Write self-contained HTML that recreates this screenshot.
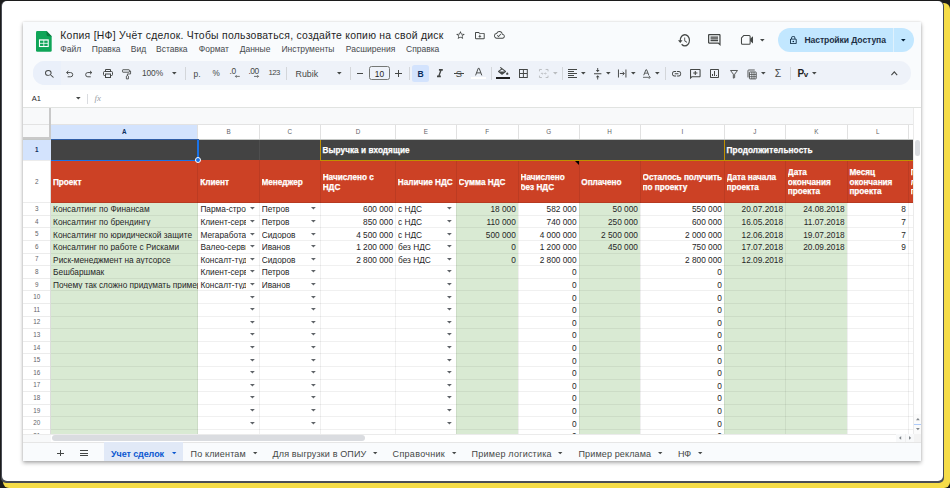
<!DOCTYPE html><html><head><meta charset='utf-8'><style>
*{box-sizing:border-box}
html,body{margin:0;padding:0}
body{width:950px;height:488px;position:relative;overflow:hidden;background:#1c1c1c;font-family:"Liberation Sans", sans-serif;}
.a{position:absolute}
.t{position:absolute;white-space:nowrap;line-height:1}
svg{position:absolute;overflow:visible}
</style></head><body>
<div class='a' style='left:3px;top:3px;width:947px;height:485px;background:#f5dc48;border-radius:6px'></div>
<div class='a' style='left:1.3px;top:0.9px;width:943.0px;height:482.0px;background:#4a4d55;border-radius:5px'></div>
<div class='a' style='left:1.5px;top:1.0px;width:941.5px;height:479.9px;background:#fff;border-radius:5px'></div>
<div class='a' style='left:22.8px;top:22.4px;width:898.2px;height:438.6px;background:#f9fbfd;box-shadow:0 2px 4px rgba(0,0,0,.32),0 0 2px rgba(0,0,0,.12)'></div>
<svg style='left:35.9px;top:30.9px' width='15.7' height='20.8' viewBox='0 0 16 21' preserveAspectRatio='none'>
<path d='M1.3 0H10.8L16 5.2V19.6Q16 21 14.6 21H1.4Q0 21 0 19.6V1.4Q0 0 1.3 0z' fill='#0fa558'/>
<path d='M10.8 0L16 5.2H12.2Q10.8 5.2 10.8 3.8z' fill='#0a7a3f'/>
<rect x='3' y='8.4' width='10' height='7.8' fill='#fff'/>
<rect x='4.1' y='9.7' width='3.5' height='2.3' fill='#0fa558'/>
<rect x='8.4' y='9.7' width='3.5' height='2.3' fill='#0fa558'/>
<rect x='4.1' y='12.8' width='3.5' height='2.3' fill='#0fa558'/>
<rect x='8.4' y='12.8' width='3.5' height='2.3' fill='#0fa558'/>
</svg>
<div class='t' style='left:60.30px;top:30.90px;font-size:10.4px;color:#1f1f1f;letter-spacing:0.26px'>Копия [НФ] Учёт сделок. Чтобы пользоваться, создайте копию на свой диск</div>
<svg style='left:456.40px;top:30.90px;' width='8.90' height='8.00' viewBox='2 2 20 19' preserveAspectRatio='none' fill='#444746'><path d='M22 9.24l-7.19-.62L12 2 9.19 8.63 2 9.24l5.46 4.73L5.82 21 12 17.27 18.18 21l-1.63-7.03L22 9.24zM12 15.4l-3.76 2.27 1-4.28-3.32-2.88 4.38-.38L12 6.1l1.71 4.04 4.38.38-3.32 2.88 1 4.28L12 15.4z'/></svg>
<svg style='left:475.30px;top:31.70px;' width='9.70' height='7.20' viewBox='2 4 20 16' preserveAspectRatio='none' fill='#444746'><path d='M20 6h-8l-2-2H4c-1.1 0-2 .9-2 2v12c0 1.1.9 2 2 2h16c1.1 0 2-.9 2-2V8c0-1.1-.9-2-2-2zm0 12H4V6h5.17l2 2H20v10zM12.5 10h-1.5v3.5H8.5L12 17l3.5-3.5H13V10z'/></svg>
<svg style='left:494.20px;top:31.20px;' width='10.80' height='7.70' viewBox='0 4 24 16' preserveAspectRatio='none' fill='#444746'><path d='M19.35 10.04A7.49 7.49 0 0 0 12 4C9.11 4 6.6 5.64 5.35 8.04A5.994 5.994 0 0 0 0 14c0 3.31 2.69 6 6 6h13c2.76 0 5-2.24 5-5 0-2.64-2.05-4.78-4.65-4.96zM19 18H6c-2.21 0-4-1.79-4-4 0-2.05 1.53-3.76 3.56-3.97l1.07-.11.5-.95A5.469 5.469 0 0 1 12 6c2.62 0 4.88 1.86 5.39 4.43l.3 1.5 1.53.11A2.98 2.98 0 0 1 22 15c0 1.65-1.35 3-3 3zm-9-3.82l-2.09-2.09L6.5 13.5 10 17l6.01-6.01-1.41-1.41z'/></svg>
<div class='t' style='left:60.30px;top:45.40px;font-size:8.5px;color:#46494d'>Файл</div>
<div class='t' style='left:91.80px;top:45.40px;font-size:8.5px;color:#46494d'>Правка</div>
<div class='t' style='left:130.80px;top:45.40px;font-size:8.5px;color:#46494d'>Вид</div>
<div class='t' style='left:156.00px;top:45.40px;font-size:8.5px;color:#46494d'>Вставка</div>
<div class='t' style='left:198.80px;top:45.40px;font-size:8.5px;color:#46494d'>Формат</div>
<div class='t' style='left:239.70px;top:45.40px;font-size:8.5px;color:#46494d'>Данные</div>
<div class='t' style='left:281.40px;top:45.40px;font-size:8.5px;color:#46494d'>Инструменты</div>
<div class='t' style='left:345.80px;top:45.40px;font-size:8.5px;color:#46494d'>Расширения</div>
<div class='t' style='left:406.00px;top:45.40px;font-size:8.5px;color:#46494d'>Справка</div>
<svg style='left:677.90px;top:33.50px;' width='12.60' height='12.60' viewBox='1 3 22 18' preserveAspectRatio='none' fill='#444746'><path d='M13 3a9 9 0 0 0-9 9H1l3.89 3.89.07.14L9 12H6c0-3.87 3.13-7 7-7s7 3.13 7 7-3.13 7-7 7c-1.93 0-3.68-.79-4.94-2.06l-1.42 1.42A8.954 8.954 0 0 0 13 21a9 9 0 0 0 0-18zm-1 5v5l4.28 2.54.72-1.21-3.5-2.08V8H12z'/></svg>
<svg style='left:707.90px;top:34.00px;' width='12.60' height='12.10' viewBox='2 2 20 20' preserveAspectRatio='none' fill='#444746'><path d='M21.99 4c0-1.1-.89-2-1.99-2H4c-1.1 0-2 .9-2 2v12c0 1.1.9 2 2 2h14l4 4-.01-18zM20 4v13.17L18.83 16H4V4h16zM6 12h12v2H6zm0-3h12v2H6zm0-3h12v2H6z'/></svg>
<svg style='left:740.70px;top:35.00px;' width='12.50' height='9.80' viewBox='0 0 26 20' preserveAspectRatio='none' fill='#444746'><path d='M6 1H17Q19 1 19 3V17Q19 19 17 19H3Q1 19 1 17V6z' fill='none' stroke='#444746' stroke-width='2.2' stroke-linejoin='round'/><path d='M19 7.5L25 2.5V17.5L19 12.5z'/></svg>
<svg style='left:759.50px;top:38.60px' width='4.60' height='2.40' viewBox='0 0 10 5' preserveAspectRatio='none'><path d='M0 0h10L5 5z' fill='#444746'/></svg>
<div class='a' style='left:777.7px;top:28px;width:136.3px;height:24px;background:#c2e7ff;border-radius:12px'></div>
<div class='a' style='left:892.84375px;top:28.0px;width:1.0px;height:24.0px;background:#dff1fd;'></div>
<svg style='left:790.00px;top:35.90px;' width='6.60' height='8.10' viewBox='4 1 16 21' preserveAspectRatio='none' fill='#001d35'><path d='M18 8h-1V6c0-2.76-2.24-5-5-5S7 3.24 7 6v2H6c-1.1 0-2 .9-2 2v10c0 1.1.9 2 2 2h12c1.1 0 2-.9 2-2V10c0-1.1-.9-2-2-2zM9 6c0-1.66 1.34-3 3-3s3 1.34 3 3v2H9V6zm9 14H6V10h12v10zm-6-3c1.1 0 2-.9 2-2s-.9-2-2-2-2 .9-2 2 .9 2 2 2z'/></svg>
<div class='t' style='left:804.50px;top:35.62px;font-size:8.6px;color:#1c2f45;font-weight:bold;letter-spacing:-0.1px'>Настройки Доступа</div>
<svg style='left:900.70px;top:39.10px' width='4.60' height='2.40' viewBox='0 0 10 5' preserveAspectRatio='none'><path d='M0 0h10L5 5z' fill='#001d35'/></svg>
<div class='a' style='left:33px;top:61.4px;width:878px;height:23.6px;background:#eef2f9;border-radius:11.8px'></div>
<div class='a' style='left:33px;top:61.4px;width:28px;height:23.6px;background:#eaf0fa;border-radius:11.8px 0 0 11.8px'></div>
<svg style='left:44.70px;top:69.80px;' width='8.90' height='7.80' viewBox='3 3 17.5 17.5' preserveAspectRatio='none' fill='#444746'><path d='M15.5 14h-.79l-.28-.27A6.471 6.471 0 0 0 16 9.5 6.5 6.5 0 1 0 9.5 16c1.61 0 3.09-.59 4.23-1.57l.27.28v.79l5 4.99L20.49 19l-4.99-5zm-6 0C7.01 14 5 11.99 5 9.5S7.01 5 9.5 5 14 7.01 14 9.5 11.99 14 9.5 14z'/></svg>
<svg style='left:65.80px;top:70.30px;' width='7.40' height='7.30' viewBox='0 0 10 10' preserveAspectRatio='none' fill='#444746'><path d='M3.2 1.2L0.8 3.5 3.2 5.8' fill='none' stroke='#444746' stroke-width='1.3'/><path d='M1 3.5H6.2A2.9 2.9 0 0 1 6.2 9.3H2.2' fill='none' stroke='#444746' stroke-width='1.3'/></svg>
<svg style='left:84.80px;top:70.30px;' width='7.40' height='7.30' viewBox='0 0 10 10' preserveAspectRatio='none' fill='#444746'><path d='M6.8 1.2L9.2 3.5 6.8 5.8' fill='none' stroke='#444746' stroke-width='1.3'/><path d='M9 3.5H3.8A2.9 2.9 0 0 0 3.8 9.3H7.8' fill='none' stroke='#444746' stroke-width='1.3'/></svg>
<svg style='left:103.00px;top:69.30px;' width='10.00' height='9.00' viewBox='0 0 20 18' preserveAspectRatio='none' fill='#444746'><path d='M5 5V1h10v4' fill='none' stroke='#444746' stroke-width='2'/><rect x='1' y='5' width='18' height='8' rx='2' fill='none' stroke='#444746' stroke-width='2'/><rect x='5' y='10' width='10' height='7' fill='#edf2fa' stroke='#444746' stroke-width='2'/></svg>
<svg style='left:122.00px;top:68.80px;' width='9.20' height='10.40' viewBox='0 0 18 21' preserveAspectRatio='none' fill='#444746'><rect x='1' y='1.5' width='13.5' height='5' rx='1' fill='none' stroke='#444746' stroke-width='1.8'/><path d='M14.5 4H16.8V10H10.6V13.5' fill='none' stroke='#444746' stroke-width='1.7'/><path d='M8.6 14.5L10.6 13L12.6 14.5V20H8.6z' fill='none' stroke='#444746' stroke-width='1.7' stroke-linejoin='round'/></svg>
<div class='t' style='left:142.00px;top:69.49px;font-size:8.4px;color:#444746;letter-spacing:-0.1px'>100%</div>
<svg style='left:172.40px;top:72.40px' width='4.60' height='2.40' viewBox='0 0 10 5' preserveAspectRatio='none'><path d='M0 0h10L5 5z' fill='#444746'/></svg>
<div class='a' style='left:185.296875px;top:67.0px;width:1.0px;height:12.5px;background:#d3d6da;'></div>
<div class='t' style='left:193.60px;top:70.19px;font-size:8.4px;color:#444746'>р.</div>
<div class='t' style='left:212.50px;top:70.36px;font-size:8.2px;color:#444746'>%</div>
<div class='t' style='left:229.60px;top:67.29px;font-size:8.4px;color:#444746;letter-spacing:-0.5px'>.0</div>
<svg style='left:235.40px;top:75.00px;' width='4.80' height='2.80' viewBox='0 0 10 6' preserveAspectRatio='none' fill='#444746'><path d='M3.2 .4L.9 3 3.2 5.6M1.2 3H10' fill='none' stroke='#444746' stroke-width='1.6'/></svg>
<div class='t' style='left:248.60px;top:67.29px;font-size:8.4px;color:#444746;letter-spacing:-0.6px'>.00</div>
<svg style='left:254.20px;top:75.00px;' width='5.00' height='2.80' viewBox='0 0 10 6' preserveAspectRatio='none' fill='#444746'><path d='M6.8 .4L9.1 3 6.8 5.6M0 3H8.8' fill='none' stroke='#444746' stroke-width='1.6'/></svg>
<div class='t' style='left:268.40px;top:68.98px;font-size:7.7px;color:#444746;letter-spacing:-0.45px'>123</div>
<div class='a' style='left:285.90625px;top:67.0px;width:1.0px;height:12.5px;background:#d3d6da;'></div>
<div class='t' style='left:295.60px;top:69.85px;font-size:8.8px;color:#444746'>Rubik</div>
<svg style='left:336.50px;top:72.40px' width='4.60' height='2.40' viewBox='0 0 10 5' preserveAspectRatio='none'><path d='M0 0h10L5 5z' fill='#444746'/></svg>
<div class='a' style='left:350.09375px;top:67.0px;width:1.0px;height:12.5px;background:#d3d6da;'></div>
<div class='a' style='left:357.203125px;top:73.09375px;width:6.0px;height:1.0px;background:#444746;'></div>
<div class='a' style='left:369.2px;top:66px;width:20.7px;height:14.4px;border:0.8px solid #747775;border-radius:2.5px'></div>
<div class='t' style='left:279.50px;width:200px;text-align:center;top:69.89px;font-size:8.4px;color:#1f1f1f'>10</div>
<div class='a' style='left:395.0px;top:73.09375px;width:6.703125px;height:1.0px;background:#444746;'></div>
<div class='a' style='left:397.84375px;top:70.296875px;width:1.0px;height:6.703125px;background:#444746;'></div>
<div class='a' style='left:409.0px;top:67.0px;width:1.0px;height:12.5px;background:#d3d6da;'></div>
<div class='a' style='left:412px;top:64.6px;width:17.3px;height:17.3px;background:#d3e3fd;border-radius:2.5px'></div>
<div class='t' style='left:320.70px;width:200px;text-align:center;top:69.82px;font-size:8.6px;color:#0b2e5e;font-weight:bold'>B</div>
<svg style='left:436.60px;top:69.20px;' width='5.80' height='8.20' viewBox='6 4 12 14' preserveAspectRatio='none' fill='#444746'><path d='M10 4v3h2.21l-3.42 8H6v3h8v-3h-2.21l3.42-8H18V4z'/></svg>
<div class='t' style='left:359.00px;width:200px;text-align:center;top:68.94px;font-size:9.4px;color:#444746'>S</div>
<div class='a' style='left:453.796875px;top:72.90625px;width:10.40625px;height:1.0px;background:#444746;'></div>
<svg style='left:474.60px;top:68.00px;' width='7.40' height='7.40' viewBox='0 0 10 10' preserveAspectRatio='none' fill='#444746'><path d='M0.8 10L4.3 0.5H5.7L9.2 10M2.3 6.6H7.7' fill='none' stroke='#444746' stroke-width='1.3'/></svg>
<div class='a' style='left:471.0px;top:77.203125px;width:14.5px;height:2.0px;background:#ffffff;'></div>
<div class='a' style='left:490.90625px;top:67.0px;width:1.0px;height:12.5px;background:#d3d6da;'></div>
<svg style='left:497.50px;top:66.80px;' width='11.00' height='7.80' viewBox='3 0 19 17' preserveAspectRatio='none' fill='#444746'><path d='M16.56 8.94L7.62 0 6.21 1.41l2.38 2.38-5.15 5.15a1.49 1.49 0 0 0 0 2.12l5.5 5.5c.29.29.68.44 1.06.44s.77-.15 1.06-.44l5.5-5.5c.59-.58.59-1.53 0-2.12zM5.21 10L10 5.21 14.79 10H5.21zM19 11.5s-2 2.17-2 3.5c0 1.1.9 2 2 2s2-.9 2-2c0-1.33-2-3.5-2-3.5z'/></svg>
<div class='a' style='left:496.296875px;top:76.59375px;width:13.90625px;height:2.0px;background:#1f1f1f;'></div>
<svg style='left:518.70px;top:69.00px;' width='8.80' height='9.00' viewBox='3 3 18 18' preserveAspectRatio='none' fill='#444746'><path d='M3 3v18h18V3H3zm8 16H5v-6h6v6zm0-8H5V5h6v6zm8 8h-6v-6h6v6zm0-8h-6V5h6v6z'/></svg>
<svg style='left:538.50px;top:69.00px;' width='9.50' height='9.00' viewBox='0 0 20 19' preserveAspectRatio='none' fill='#b9bcbf'><path d='M1 5V1H6M14 1H19V5M19 14V18H14M6 18H1V14' fill='none' stroke='#b9bcbf' stroke-width='2'/><path d='M4 9.5H8M6.5 7.5L8.5 9.5 6.5 11.5M16 9.5H12M13.5 7.5L11.5 9.5 13.5 11.5' fill='none' stroke='#b9bcbf' stroke-width='1.6'/></svg>
<svg style='left:553.20px;top:72.40px' width='4.60' height='2.40' viewBox='0 0 10 5' preserveAspectRatio='none'><path d='M0 0h10L5 5z' fill='#b9bcbf'/></svg>
<div class='a' style='left:561.90625px;top:67.0px;width:1.0px;height:12.5px;background:#d3d6da;'></div>
<svg style='left:568.00px;top:69.00px;' width='9.00' height='9.00' viewBox='3 3 18 18' preserveAspectRatio='none' fill='#444746'><path d='M15 15H3v2h12v-2zm0-8H3v2h12V7zM3 13h18v-2H3v2zm0 8h18v-2H3v2zM3 3v2h18V3H3z'/></svg>
<svg style='left:581.40px;top:72.40px' width='4.60' height='2.40' viewBox='0 0 10 5' preserveAspectRatio='none'><path d='M0 0h10L5 5z' fill='#444746'/></svg>
<svg style='left:593.60px;top:67.80px;' width='7.40' height='11.40' viewBox='4 1 16 22' preserveAspectRatio='none' fill='#444746'><path d='M8 19h3v4h2v-4h3l-4-4-4 4zm8-14h-3V1h-2v4H8l4 4 4-4zM4 11v2h16v-2H4z'/></svg>
<svg style='left:605.70px;top:72.40px' width='4.60' height='2.40' viewBox='0 0 10 5' preserveAspectRatio='none'><path d='M0 0h10L5 5z' fill='#444746'/></svg>
<svg style='left:617.60px;top:69.00px;' width='8.40' height='9.00' viewBox='0 0 18 18' preserveAspectRatio='none' fill='#444746'><path d='M1 1V17M17 1V17' stroke='#444746' stroke-width='2' fill='none'/><path d='M4 9H13M10 5.5L13.5 9 10 12.5' stroke='#444746' stroke-width='2' fill='none'/></svg>
<svg style='left:630.50px;top:72.40px' width='4.60' height='2.40' viewBox='0 0 10 5' preserveAspectRatio='none'><path d='M0 0h10L5 5z' fill='#444746'/></svg>
<svg style='left:642.70px;top:68.80px;' width='7.80' height='10.40' viewBox='0 0 16 20' preserveAspectRatio='none' fill='#444746'><path d='M1.5 12L6 1.5H7.5L12 12' fill='none' stroke='#444746' stroke-width='1.8'/><path d='M3.5 8H10' stroke='#444746' stroke-width='1.6'/><path d='M0 16H14M12 13L15 16 12 19' fill='none' stroke='#444746' stroke-width='1.6'/></svg>
<svg style='left:654.70px;top:72.40px' width='4.60' height='2.40' viewBox='0 0 10 5' preserveAspectRatio='none'><path d='M0 0h10L5 5z' fill='#444746'/></svg>
<div class='a' style='left:664.5px;top:67.0px;width:1.0px;height:12.5px;background:#d3d6da;'></div>
<svg style='left:671.80px;top:70.60px;' width='9.20' height='5.60' viewBox='2 7 20 10' preserveAspectRatio='none' fill='#444746'><path d='M3.9 12c0-1.71 1.39-3.1 3.1-3.1h4V7H7c-2.76 0-5 2.24-5 5s2.24 5 5 5h4v-1.9H7c-1.71 0-3.1-1.39-3.1-3.1zM8 13h8v-2H8v2zm9-6h-4v1.9h4c1.71 0 3.1 1.39 3.1 3.1s-1.39 3.1-3.1 3.1h-4V17h4c2.76 0 5-2.24 5-5s-2.24-5-5-5z'/></svg>
<svg style='left:690.00px;top:68.80px;' width='10.60' height='10.20' viewBox='2 2 20 20' preserveAspectRatio='none' fill='#444746'><path d='M20 2H4c-1.1 0-2 .9-2 2v18l4-4h14c1.1 0 2-.9 2-2V4c0-1.1-.9-2-2-2zm0 14H5.17L4 17.17V4h16v12z'/><path d='M11 6h2v3h3v2h-3v3h-2v-3H8V9h3z'/></svg>
<svg style='left:710.00px;top:69.00px;' width='9.00' height='9.00' viewBox='3 3 18 18' preserveAspectRatio='none' fill='#444746'><path d='M19 3H5c-1.1 0-2 .9-2 2v14c0 1.1.9 2 2 2h14c1.1 0 2-.9 2-2V5c0-1.1-.9-2-2-2zm0 16H5V5h14v14zM7 13h2v4H7zm4-6h2v10h-2zm4 8h2v2h-2z'/></svg>
<svg style='left:730.00px;top:69.60px;' width='8.00' height='8.40' viewBox='0 0 16 17' preserveAspectRatio='none' fill='#444746'><path d='M1 1H15L9.3 8.5V15.5L6.7 16.5V8.5z' fill='none' stroke='#444746' stroke-width='1.8' stroke-linejoin='round'/></svg>
<svg style='left:747.00px;top:68.80px;' width='9.70' height='10.40' viewBox='0 0 20 21' preserveAspectRatio='none' fill='#444746'><rect x='5' y='6' width='14' height='14' rx='1' fill='none' stroke='#444746' stroke-width='1.8'/><path d='M5 11H19M5 15.5H19M10 6V20M14.5 6V20' stroke='#444746' stroke-width='1.5'/><path d='M2 17V3.5Q2 2 3.5 2H16' fill='none' stroke='#444746' stroke-width='1.8'/></svg>
<svg style='left:760.70px;top:72.40px' width='4.60' height='2.40' viewBox='0 0 10 5' preserveAspectRatio='none'><path d='M0 0h10L5 5z' fill='#444746'/></svg>
<div class='t' style='left:678.00px;width:200px;text-align:center;top:68.80px;font-size:10.4px;color:#444746'>&Sigma;</div>
<div class='a' style='left:789.796875px;top:67.0px;width:1.0px;height:12.5px;background:#d3d6da;'></div>
<div class='t' style='left:797.40px;top:69.44px;font-size:10.0px;color:#1f1f1f;font-weight:bold;letter-spacing:-0.4px'>P<span style='font-size:8px'>v</span></div>
<svg style='left:812.40px;top:72.40px' width='4.60' height='2.40' viewBox='0 0 10 5' preserveAspectRatio='none'><path d='M0 0h10L5 5z' fill='#444746'/></svg>
<svg style='left:891.00px;top:70.80px;' width='6.60' height='4.60' viewBox='6 8 12 7.41' preserveAspectRatio='none' fill='#444746'><path d='M12 8l-6 6 1.41 1.41L12 10.83l4.59 4.58L18 14z'/></svg>
<div class='a' style='left:22.796875px;top:90.0px;width:898.203125px;height:16.90625px;background:#ffffff;'></div>
<div class='a' style='left:22.796875px;top:106.75px;width:898.203125px;height:1.0px;background:#e1e3e1;'></div>
<div class='t' style='left:31.70px;top:94.65px;font-size:7.5px;color:#1f1f1f'>A1</div>
<svg style='left:75.50px;top:97.40px' width='4.60' height='2.40' viewBox='0 0 10 5' preserveAspectRatio='none'><path d='M0 0h10L5 5z' fill='#444746'/></svg>
<div class='a' style='left:87.40625px;top:94.203125px;width:1.0px;height:9.5px;background:#dadce0;'></div>
<div class='t' style='left:94.40px;top:94.38px;font-size:9.0px;color:#9aa0a6;font-family:"Liberation Serif",serif;font-style:italic'>fx</div>
<div class='a' style='left:22.796875px;top:107.59375px;width:890.796875px;height:17.0px;background:#f8f9fa;'></div>
<div class='a' style='left:22.796875px;top:124.203125px;width:890.796875px;height:1.0px;background:#e3e3e3;'></div>
<div class='a' style='left:22.796875px;top:125.0px;width:27.796875px;height:14.09375px;background:#f8f9fa;'></div>
<div class='a' style='left:50.59375px;top:125.0px;width:863.0px;height:14.09375px;background:#ffffff;'></div>
<div class='a' style='left:50.59375px;top:125.0px;width:147.3125px;height:14.09375px;background:#d3e3fd;'></div>
<div class='t' style='left:24.25px;width:200px;text-align:center;top:129.07px;font-size:6.3px;color:#0b2e5e;font-weight:bold'>A</div>
<div class='a' style='left:197.453125px;top:125.0px;width:1.0px;height:14.09375px;background:#e1e1e1;'></div>
<div class='t' style='left:128.55px;width:200px;text-align:center;top:129.07px;font-size:6.3px;color:#5f6368'>B</div>
<div class='a' style='left:258.75px;top:125.0px;width:1.0px;height:14.09375px;background:#e1e1e1;'></div>
<div class='t' style='left:189.80px;width:200px;text-align:center;top:129.07px;font-size:6.3px;color:#5f6368'>C</div>
<div class='a' style='left:319.953125px;top:125.0px;width:1.0px;height:14.09375px;background:#e1e1e1;'></div>
<div class='t' style='left:257.95px;width:200px;text-align:center;top:129.07px;font-size:6.3px;color:#5f6368'>D</div>
<div class='a' style='left:395.046875px;top:125.0px;width:1.0px;height:14.09375px;background:#e1e1e1;'></div>
<div class='t' style='left:325.90px;width:200px;text-align:center;top:129.07px;font-size:6.3px;color:#5f6368'>E</div>
<div class='a' style='left:455.84375px;top:125.0px;width:1.0px;height:14.09375px;background:#e1e1e1;'></div>
<div class='t' style='left:387.25px;width:200px;text-align:center;top:129.07px;font-size:6.3px;color:#5f6368'>F</div>
<div class='a' style='left:517.75px;top:125.0px;width:1.0px;height:14.09375px;background:#e1e1e1;'></div>
<div class='t' style='left:448.60px;width:200px;text-align:center;top:129.07px;font-size:6.3px;color:#5f6368'>G</div>
<div class='a' style='left:578.546875px;top:125.0px;width:1.0px;height:14.09375px;background:#e1e1e1;'></div>
<div class='t' style='left:509.65px;width:200px;text-align:center;top:129.07px;font-size:6.3px;color:#5f6368'>H</div>
<div class='a' style='left:639.84375px;top:125.0px;width:1.0px;height:14.09375px;background:#e1e1e1;'></div>
<div class='t' style='left:582.30px;width:200px;text-align:center;top:129.07px;font-size:6.3px;color:#5f6368'>I</div>
<div class='a' style='left:723.84375px;top:125.0px;width:1.0px;height:14.09375px;background:#e1e1e1;'></div>
<div class='t' style='left:654.90px;width:200px;text-align:center;top:129.07px;font-size:6.3px;color:#5f6368'>J</div>
<div class='a' style='left:785.046875px;top:125.0px;width:1.0px;height:14.09375px;background:#e1e1e1;'></div>
<div class='t' style='left:716.30px;width:200px;text-align:center;top:129.07px;font-size:6.3px;color:#5f6368'>K</div>
<div class='a' style='left:846.65625px;top:125.0px;width:1.0px;height:14.09375px;background:#e1e1e1;'></div>
<div class='t' style='left:777.70px;width:200px;text-align:center;top:129.07px;font-size:6.3px;color:#5f6368'>L</div>
<div class='a' style='left:907.84375px;top:125.0px;width:1.0px;height:14.09375px;background:#e1e1e1;'></div>
<div class='a' style='left:22.796875px;top:138.90625px;width:890.796875px;height:1.0px;background:#c4c7c5;'></div>
<div class='a' style='left:48.90625px;top:107.59375px;width:2.1875px;height:31.8125px;background:#c9c9c9;'></div>
<div class='a' style='left:22.796875px;top:136.90625px;width:28.296875px;height:2.5px;background:#c9c9c9;'></div>
<div class='a' style='left:50.59375px;top:139.59375px;width:147.3125px;height:20.8125px;background:#434343;'></div>
<div class='a' style='left:50.59375px;top:160.40625px;width:147.3125px;height:42.1875px;background:#cc4125;'></div>
<div class='a' style='left:50.59375px;top:202.59375px;width:147.3125px;height:231.3125px;background:#d9ead3;'></div>
<div class='a' style='left:197.90625px;top:139.59375px;width:61.296875px;height:20.8125px;background:#434343;'></div>
<div class='a' style='left:197.90625px;top:160.40625px;width:61.296875px;height:42.1875px;background:#cc4125;'></div>
<div class='a' style='left:197.90625px;top:202.59375px;width:61.296875px;height:231.3125px;background:#ffffff;'></div>
<div class='a' style='left:259.203125px;top:139.59375px;width:61.203125px;height:20.8125px;background:#434343;'></div>
<div class='a' style='left:259.203125px;top:160.40625px;width:61.203125px;height:42.1875px;background:#cc4125;'></div>
<div class='a' style='left:259.203125px;top:202.59375px;width:61.203125px;height:231.3125px;background:#ffffff;'></div>
<div class='a' style='left:320.40625px;top:139.59375px;width:75.09375px;height:20.8125px;background:#434343;'></div>
<div class='a' style='left:320.40625px;top:160.40625px;width:75.09375px;height:42.1875px;background:#cc4125;'></div>
<div class='a' style='left:320.40625px;top:202.59375px;width:75.09375px;height:231.3125px;background:#ffffff;'></div>
<div class='a' style='left:395.5px;top:139.59375px;width:60.796875px;height:20.8125px;background:#434343;'></div>
<div class='a' style='left:395.5px;top:160.40625px;width:60.796875px;height:42.1875px;background:#cc4125;'></div>
<div class='a' style='left:395.5px;top:202.59375px;width:60.796875px;height:231.3125px;background:#ffffff;'></div>
<div class='a' style='left:456.296875px;top:139.59375px;width:61.90625px;height:20.8125px;background:#434343;'></div>
<div class='a' style='left:456.296875px;top:160.40625px;width:61.90625px;height:42.1875px;background:#cc4125;'></div>
<div class='a' style='left:456.296875px;top:202.59375px;width:61.90625px;height:231.3125px;background:#d9ead3;'></div>
<div class='a' style='left:518.203125px;top:139.59375px;width:60.796875px;height:20.8125px;background:#434343;'></div>
<div class='a' style='left:518.203125px;top:160.40625px;width:60.796875px;height:42.1875px;background:#cc4125;'></div>
<div class='a' style='left:518.203125px;top:202.59375px;width:60.796875px;height:231.3125px;background:#ffffff;'></div>
<div class='a' style='left:579.0px;top:139.59375px;width:61.296875px;height:20.8125px;background:#434343;'></div>
<div class='a' style='left:579.0px;top:160.40625px;width:61.296875px;height:42.1875px;background:#cc4125;'></div>
<div class='a' style='left:579.0px;top:202.59375px;width:61.296875px;height:231.3125px;background:#d9ead3;'></div>
<div class='a' style='left:640.296875px;top:139.59375px;width:84.0px;height:20.8125px;background:#434343;'></div>
<div class='a' style='left:640.296875px;top:160.40625px;width:84.0px;height:42.1875px;background:#cc4125;'></div>
<div class='a' style='left:640.296875px;top:202.59375px;width:84.0px;height:231.3125px;background:#ffffff;'></div>
<div class='a' style='left:724.296875px;top:139.59375px;width:61.203125px;height:20.8125px;background:#434343;'></div>
<div class='a' style='left:724.296875px;top:160.40625px;width:61.203125px;height:42.1875px;background:#cc4125;'></div>
<div class='a' style='left:724.296875px;top:202.59375px;width:61.203125px;height:231.3125px;background:#d9ead3;'></div>
<div class='a' style='left:785.5px;top:139.59375px;width:61.59375px;height:20.8125px;background:#434343;'></div>
<div class='a' style='left:785.5px;top:160.40625px;width:61.59375px;height:42.1875px;background:#cc4125;'></div>
<div class='a' style='left:785.5px;top:202.59375px;width:61.59375px;height:231.3125px;background:#d9ead3;'></div>
<div class='a' style='left:847.09375px;top:139.59375px;width:61.203125px;height:20.8125px;background:#434343;'></div>
<div class='a' style='left:847.09375px;top:160.40625px;width:61.203125px;height:42.1875px;background:#cc4125;'></div>
<div class='a' style='left:847.09375px;top:202.59375px;width:61.203125px;height:231.3125px;background:#ffffff;'></div>
<div class='a' style='left:908.296875px;top:139.59375px;width:5.296875px;height:20.8125px;background:#434343;'></div>
<div class='a' style='left:908.296875px;top:160.40625px;width:5.296875px;height:42.1875px;background:#cc4125;'></div>
<div class='a' style='left:908.296875px;top:202.59375px;width:5.296875px;height:231.3125px;background:#ffffff;'></div>
<div class='a' style='left:22.796875px;top:139.59375px;width:27.796875px;height:294.3125px;background:#ffffff;'></div>
<div class='a' style='left:22.796875px;top:139.59375px;width:27.796875px;height:20.8125px;background:#d3e3fd;'></div>
<div class='a' style='left:22.796875px;top:159.90625px;width:27.796875px;height:1.0px;background:#ececec;'></div>
<div class='a' style='left:22.796875px;top:202.09375px;width:27.796875px;height:1.0px;background:#ececec;'></div>
<div class='a' style='left:22.796875px;top:214.703125px;width:27.796875px;height:1.0px;background:#ececec;'></div>
<div class='a' style='left:22.796875px;top:227.296875px;width:27.796875px;height:1.0px;background:#ececec;'></div>
<div class='a' style='left:22.796875px;top:239.90625px;width:27.796875px;height:1.0px;background:#ececec;'></div>
<div class='a' style='left:22.796875px;top:252.5px;width:27.796875px;height:1.0px;background:#ececec;'></div>
<div class='a' style='left:22.796875px;top:265.09375px;width:27.796875px;height:1.0px;background:#ececec;'></div>
<div class='a' style='left:22.796875px;top:277.703125px;width:27.796875px;height:1.0px;background:#ececec;'></div>
<div class='a' style='left:22.796875px;top:290.296875px;width:27.796875px;height:1.0px;background:#ececec;'></div>
<div class='a' style='left:22.796875px;top:302.90625px;width:27.796875px;height:1.0px;background:#ececec;'></div>
<div class='a' style='left:22.796875px;top:315.5px;width:27.796875px;height:1.0px;background:#ececec;'></div>
<div class='a' style='left:22.796875px;top:328.09375px;width:27.796875px;height:1.0px;background:#ececec;'></div>
<div class='a' style='left:22.796875px;top:340.703125px;width:27.796875px;height:1.0px;background:#ececec;'></div>
<div class='a' style='left:22.796875px;top:353.296875px;width:27.796875px;height:1.0px;background:#ececec;'></div>
<div class='a' style='left:22.796875px;top:365.90625px;width:27.796875px;height:1.0px;background:#ececec;'></div>
<div class='a' style='left:22.796875px;top:378.5px;width:27.796875px;height:1.0px;background:#ececec;'></div>
<div class='a' style='left:22.796875px;top:391.09375px;width:27.796875px;height:1.0px;background:#ececec;'></div>
<div class='a' style='left:22.796875px;top:403.703125px;width:27.796875px;height:1.0px;background:#ececec;'></div>
<div class='a' style='left:22.796875px;top:416.296875px;width:27.796875px;height:1.0px;background:#ececec;'></div>
<div class='a' style='left:22.796875px;top:428.90625px;width:27.796875px;height:1.0px;background:#ececec;'></div>
<div class='a' style='left:50.59375px;top:214.703125px;width:863.0px;height:1.0px;background:rgba(0,0,0,0.06);'></div>
<div class='a' style='left:50.59375px;top:227.296875px;width:863.0px;height:1.0px;background:rgba(0,0,0,0.06);'></div>
<div class='a' style='left:50.59375px;top:239.90625px;width:863.0px;height:1.0px;background:rgba(0,0,0,0.06);'></div>
<div class='a' style='left:50.59375px;top:252.5px;width:863.0px;height:1.0px;background:rgba(0,0,0,0.06);'></div>
<div class='a' style='left:50.59375px;top:265.09375px;width:863.0px;height:1.0px;background:rgba(0,0,0,0.06);'></div>
<div class='a' style='left:50.59375px;top:277.703125px;width:863.0px;height:1.0px;background:rgba(0,0,0,0.06);'></div>
<div class='a' style='left:50.59375px;top:290.296875px;width:863.0px;height:1.0px;background:rgba(0,0,0,0.06);'></div>
<div class='a' style='left:50.59375px;top:302.90625px;width:863.0px;height:1.0px;background:rgba(0,0,0,0.06);'></div>
<div class='a' style='left:50.59375px;top:315.5px;width:863.0px;height:1.0px;background:rgba(0,0,0,0.06);'></div>
<div class='a' style='left:50.59375px;top:328.09375px;width:863.0px;height:1.0px;background:rgba(0,0,0,0.06);'></div>
<div class='a' style='left:50.59375px;top:340.703125px;width:863.0px;height:1.0px;background:rgba(0,0,0,0.06);'></div>
<div class='a' style='left:50.59375px;top:353.296875px;width:863.0px;height:1.0px;background:rgba(0,0,0,0.06);'></div>
<div class='a' style='left:50.59375px;top:365.90625px;width:863.0px;height:1.0px;background:rgba(0,0,0,0.06);'></div>
<div class='a' style='left:50.59375px;top:378.5px;width:863.0px;height:1.0px;background:rgba(0,0,0,0.06);'></div>
<div class='a' style='left:50.59375px;top:391.09375px;width:863.0px;height:1.0px;background:rgba(0,0,0,0.06);'></div>
<div class='a' style='left:50.59375px;top:403.703125px;width:863.0px;height:1.0px;background:rgba(0,0,0,0.06);'></div>
<div class='a' style='left:50.59375px;top:416.296875px;width:863.0px;height:1.0px;background:rgba(0,0,0,0.06);'></div>
<div class='a' style='left:50.59375px;top:428.90625px;width:863.0px;height:1.0px;background:rgba(0,0,0,0.06);'></div>
<div class='a' style='left:50.59375px;top:202.15625px;width:863.0px;height:1.0px;background:rgba(0,0,0,0.10);'></div>
<div class='a' style='left:197.40625px;top:202.59375px;width:1.0px;height:231.3125px;background:rgba(0,0,0,0.06);'></div>
<div class='a' style='left:197.453125px;top:160.40625px;width:1.0px;height:42.1875px;background:rgba(0,0,0,0.08);'></div>
<div class='a' style='left:197.453125px;top:139.59375px;width:1.0px;height:20.8125px;background:rgba(255,255,255,0.06);'></div>
<div class='a' style='left:258.703125px;top:202.59375px;width:1.0px;height:231.3125px;background:rgba(0,0,0,0.06);'></div>
<div class='a' style='left:258.75px;top:160.40625px;width:1.0px;height:42.1875px;background:rgba(0,0,0,0.08);'></div>
<div class='a' style='left:258.75px;top:139.59375px;width:1.0px;height:20.8125px;background:rgba(255,255,255,0.06);'></div>
<div class='a' style='left:319.90625px;top:202.59375px;width:1.0px;height:231.3125px;background:rgba(0,0,0,0.06);'></div>
<div class='a' style='left:319.953125px;top:160.40625px;width:1.0px;height:42.1875px;background:rgba(0,0,0,0.08);'></div>
<div class='a' style='left:319.953125px;top:139.59375px;width:1.0px;height:20.8125px;background:rgba(255,255,255,0.06);'></div>
<div class='a' style='left:395.0px;top:202.59375px;width:1.0px;height:231.3125px;background:rgba(0,0,0,0.06);'></div>
<div class='a' style='left:395.046875px;top:160.40625px;width:1.0px;height:42.1875px;background:rgba(0,0,0,0.08);'></div>
<div class='a' style='left:455.796875px;top:202.59375px;width:1.0px;height:231.3125px;background:rgba(0,0,0,0.06);'></div>
<div class='a' style='left:455.84375px;top:160.40625px;width:1.0px;height:42.1875px;background:rgba(0,0,0,0.08);'></div>
<div class='a' style='left:517.703125px;top:202.59375px;width:1.0px;height:231.3125px;background:rgba(0,0,0,0.06);'></div>
<div class='a' style='left:517.75px;top:160.40625px;width:1.0px;height:42.1875px;background:rgba(0,0,0,0.08);'></div>
<div class='a' style='left:578.5px;top:202.59375px;width:1.0px;height:231.3125px;background:rgba(0,0,0,0.06);'></div>
<div class='a' style='left:578.546875px;top:160.40625px;width:1.0px;height:42.1875px;background:rgba(0,0,0,0.08);'></div>
<div class='a' style='left:639.796875px;top:202.59375px;width:1.0px;height:231.3125px;background:rgba(0,0,0,0.06);'></div>
<div class='a' style='left:639.84375px;top:160.40625px;width:1.0px;height:42.1875px;background:rgba(0,0,0,0.08);'></div>
<div class='a' style='left:723.796875px;top:202.59375px;width:1.0px;height:231.3125px;background:rgba(0,0,0,0.06);'></div>
<div class='a' style='left:723.84375px;top:160.40625px;width:1.0px;height:42.1875px;background:rgba(0,0,0,0.08);'></div>
<div class='a' style='left:785.0px;top:202.59375px;width:1.0px;height:231.3125px;background:rgba(0,0,0,0.06);'></div>
<div class='a' style='left:785.046875px;top:160.40625px;width:1.0px;height:42.1875px;background:rgba(0,0,0,0.08);'></div>
<div class='a' style='left:846.59375px;top:202.59375px;width:1.0px;height:231.3125px;background:rgba(0,0,0,0.06);'></div>
<div class='a' style='left:846.65625px;top:160.40625px;width:1.0px;height:42.1875px;background:rgba(0,0,0,0.08);'></div>
<div class='a' style='left:907.796875px;top:202.59375px;width:1.0px;height:231.3125px;background:rgba(0,0,0,0.06);'></div>
<div class='a' style='left:907.84375px;top:160.40625px;width:1.0px;height:42.1875px;background:rgba(0,0,0,0.08);'></div>
<div class='a' style='left:50.046875px;top:160.40625px;width:1.0px;height:273.5px;background:#dcdcdc;'></div>
<div class='t' style='left:-63.30px;width:200px;text-align:center;top:147.27px;font-size:6.3px;color:#0b2e5e;font-weight:bold'>1</div>
<div class='t' style='left:-63.30px;width:200px;text-align:center;top:178.57px;font-size:6.3px;color:#5f6368'>2</div>
<div class='t' style='left:-63.30px;width:200px;text-align:center;top:205.97px;font-size:6.3px;color:#5f6368'>3</div>
<div class='t' style='left:-63.30px;width:200px;text-align:center;top:218.57px;font-size:6.3px;color:#5f6368'>4</div>
<div class='t' style='left:-63.30px;width:200px;text-align:center;top:231.17px;font-size:6.3px;color:#5f6368'>5</div>
<div class='t' style='left:-63.30px;width:200px;text-align:center;top:243.77px;font-size:6.3px;color:#5f6368'>6</div>
<div class='t' style='left:-63.30px;width:200px;text-align:center;top:256.37px;font-size:6.3px;color:#5f6368'>7</div>
<div class='t' style='left:-63.30px;width:200px;text-align:center;top:268.97px;font-size:6.3px;color:#5f6368'>8</div>
<div class='t' style='left:-63.30px;width:200px;text-align:center;top:281.57px;font-size:6.3px;color:#5f6368'>9</div>
<div class='t' style='left:-63.30px;width:200px;text-align:center;top:294.17px;font-size:6.3px;color:#5f6368'>10</div>
<div class='t' style='left:-63.30px;width:200px;text-align:center;top:306.77px;font-size:6.3px;color:#5f6368'>11</div>
<div class='t' style='left:-63.30px;width:200px;text-align:center;top:319.37px;font-size:6.3px;color:#5f6368'>12</div>
<div class='t' style='left:-63.30px;width:200px;text-align:center;top:331.97px;font-size:6.3px;color:#5f6368'>13</div>
<div class='t' style='left:-63.30px;width:200px;text-align:center;top:344.57px;font-size:6.3px;color:#5f6368'>14</div>
<div class='t' style='left:-63.30px;width:200px;text-align:center;top:357.17px;font-size:6.3px;color:#5f6368'>15</div>
<div class='t' style='left:-63.30px;width:200px;text-align:center;top:369.77px;font-size:6.3px;color:#5f6368'>16</div>
<div class='t' style='left:-63.30px;width:200px;text-align:center;top:382.37px;font-size:6.3px;color:#5f6368'>17</div>
<div class='t' style='left:-63.30px;width:200px;text-align:center;top:394.97px;font-size:6.3px;color:#5f6368'>18</div>
<div class='t' style='left:-63.30px;width:200px;text-align:center;top:407.57px;font-size:6.3px;color:#5f6368'>19</div>
<div class='t' style='left:-63.30px;width:200px;text-align:center;top:420.17px;font-size:6.3px;color:#5f6368'>20</div>
<div class='t' style='left:-63.30px;width:200px;text-align:center;top:432.77px;font-size:6.3px;color:#5f6368'>21</div>
<div class='a' style='left:320.0px;top:139.59375px;width:1.0px;height:21.203125px;background:#bf9000;'></div>
<div class='a' style='left:723.90625px;top:139.59375px;width:1.0px;height:21.203125px;background:#bf9000;'></div>
<div class='a' style='left:320.09375px;top:159.90625px;width:593.5px;height:1.0px;background:#bf9000;'></div>
<div class='t' style='left:322.60px;top:147.16px;font-size:8.2px;color:#fff;font-weight:bold;letter-spacing:0.05px;-webkit-text-stroke:0.25px #fff'>Выручка и входящие</div>
<div class='t' style='left:726.50px;top:147.16px;font-size:8.2px;color:#fff;font-weight:bold;letter-spacing:0.12px;-webkit-text-stroke:0.25px #fff'>Продолжительность</div>
<div class='t' style='left:52.90px;top:178.76px;width:144.90px;overflow:hidden;font-size:8.2px;color:#fff;font-weight:bold;-webkit-text-stroke:0.25px #fff'>Проект</div>
<div class='t' style='left:200.20px;top:178.76px;width:58.90px;overflow:hidden;font-size:8.2px;color:#fff;font-weight:bold;-webkit-text-stroke:0.25px #fff'>Клиент</div>
<div class='t' style='left:261.50px;top:178.76px;width:58.80px;overflow:hidden;font-size:8.2px;color:#fff;font-weight:bold;-webkit-text-stroke:0.25px #fff'>Менеджер</div>
<div class='t' style='left:322.70px;top:174.06px;width:72.70px;overflow:hidden;font-size:8.2px;color:#fff;font-weight:bold;-webkit-text-stroke:0.25px #fff'>Начислено с</div>
<div class='t' style='left:322.70px;top:183.76px;width:72.70px;overflow:hidden;font-size:8.2px;color:#fff;font-weight:bold;-webkit-text-stroke:0.25px #fff'>НДС</div>
<div class='t' style='left:397.80px;top:178.76px;width:58.40px;overflow:hidden;font-size:8.2px;color:#fff;font-weight:bold;-webkit-text-stroke:0.25px #fff'>Наличие НДС</div>
<div class='t' style='left:458.60px;top:178.76px;width:59.50px;overflow:hidden;font-size:8.2px;color:#fff;font-weight:bold;-webkit-text-stroke:0.25px #fff'>Сумма НДС</div>
<div class='t' style='left:520.50px;top:174.06px;width:58.40px;overflow:hidden;font-size:8.2px;color:#fff;font-weight:bold;-webkit-text-stroke:0.25px #fff'>Начислено</div>
<div class='t' style='left:520.50px;top:183.76px;width:58.40px;overflow:hidden;font-size:8.2px;color:#fff;font-weight:bold;-webkit-text-stroke:0.25px #fff'>без НДС</div>
<div class='t' style='left:581.30px;top:178.76px;width:58.90px;overflow:hidden;font-size:8.2px;color:#fff;font-weight:bold;-webkit-text-stroke:0.25px #fff'>Оплачено</div>
<div class='t' style='left:642.60px;top:174.06px;width:81.60px;overflow:hidden;font-size:8.2px;color:#fff;font-weight:bold;-webkit-text-stroke:0.25px #fff'>Осталось получить</div>
<div class='t' style='left:642.60px;top:183.76px;width:81.60px;overflow:hidden;font-size:8.2px;color:#fff;font-weight:bold;-webkit-text-stroke:0.25px #fff'>по проекту</div>
<div class='t' style='left:726.60px;top:174.06px;width:58.80px;overflow:hidden;font-size:8.2px;color:#fff;font-weight:bold;-webkit-text-stroke:0.25px #fff'>Дата начала</div>
<div class='t' style='left:726.60px;top:183.76px;width:58.80px;overflow:hidden;font-size:8.2px;color:#fff;font-weight:bold;-webkit-text-stroke:0.25px #fff'>проекта</div>
<div class='t' style='left:787.80px;top:169.26px;width:59.20px;overflow:hidden;font-size:8.2px;color:#fff;font-weight:bold;-webkit-text-stroke:0.25px #fff'>Дата</div>
<div class='t' style='left:787.80px;top:178.66px;width:59.20px;overflow:hidden;font-size:8.2px;color:#fff;font-weight:bold;-webkit-text-stroke:0.25px #fff'>окончания</div>
<div class='t' style='left:787.80px;top:188.06px;width:59.20px;overflow:hidden;font-size:8.2px;color:#fff;font-weight:bold;-webkit-text-stroke:0.25px #fff'>проекта</div>
<div class='t' style='left:849.40px;top:169.26px;width:58.80px;overflow:hidden;font-size:8.2px;color:#fff;font-weight:bold;-webkit-text-stroke:0.25px #fff'>Месяц</div>
<div class='t' style='left:849.40px;top:178.66px;width:58.80px;overflow:hidden;font-size:8.2px;color:#fff;font-weight:bold;-webkit-text-stroke:0.25px #fff'>окончания</div>
<div class='t' style='left:849.40px;top:188.06px;width:58.80px;overflow:hidden;font-size:8.2px;color:#fff;font-weight:bold;-webkit-text-stroke:0.25px #fff'>проекта</div>
<div class='t' style='left:910.60px;top:169.26px;width:2.90px;overflow:hidden;font-size:8.2px;color:#fff;font-weight:bold;-webkit-text-stroke:0.25px #fff'>Пр</div>
<div class='t' style='left:910.60px;top:178.66px;width:2.90px;overflow:hidden;font-size:8.2px;color:#fff;font-weight:bold;-webkit-text-stroke:0.25px #fff'>ли</div>
<div class='t' style='left:910.60px;top:188.06px;width:2.90px;overflow:hidden;font-size:8.2px;color:#fff;font-weight:bold;-webkit-text-stroke:0.25px #fff'>пр</div>
<svg style='left:574.80px;top:160.60px' width='4' height='4' viewBox='0 0 4 4'><path d='M0 0H4V4z' fill='#000'/></svg>
<div class='t' style='left:53.10px;top:205.37px;width:144.70px;overflow:hidden;font-size:8.3px;color:#262626;'>Консалтинг по Финансам</div>
<div class='t' style='left:200.40px;top:205.37px;width:46.00px;overflow:hidden;font-size:8.3px;color:#262626;'>Парма-строй</div>
<div class='t' style='left:261.70px;top:205.37px;width:45.90px;overflow:hidden;font-size:8.3px;color:#262626;'>Петров</div>
<div class='t' style='right:556.90px;top:205.37px;font-size:8.3px;color:#262626;text-align:right;'>600 000</div>
<div class='t' style='left:398.00px;top:205.37px;width:45.50px;overflow:hidden;font-size:8.3px;color:#262626;'>с НДС</div>
<div class='t' style='right:434.20px;top:205.37px;font-size:8.3px;color:#262626;text-align:right;'>18 000</div>
<div class='t' style='right:373.40px;top:205.37px;font-size:8.3px;color:#262626;text-align:right;'>582 000</div>
<div class='t' style='right:312.10px;top:205.37px;font-size:8.3px;color:#262626;text-align:right;'>50 000</div>
<div class='t' style='right:228.10px;top:205.37px;font-size:8.3px;color:#262626;text-align:right;'>550 000</div>
<div class='t' style='right:166.90px;top:205.37px;font-size:8.3px;color:#262626;text-align:right;'>20.07.2018</div>
<div class='t' style='right:105.30px;top:205.37px;font-size:8.3px;color:#262626;text-align:right;'>24.08.2018</div>
<div class='t' style='right:44.10px;top:205.37px;font-size:8.3px;color:#262626;text-align:right;'>8</div>
<svg style='left:250.20px;top:207.30px' width='4.80' height='2.60' viewBox='0 0 10 5' preserveAspectRatio='none'><path d='M0 0h10L5 5z' fill='#5f6368'/></svg>
<svg style='left:311.40px;top:207.30px' width='4.80' height='2.60' viewBox='0 0 10 5' preserveAspectRatio='none'><path d='M0 0h10L5 5z' fill='#5f6368'/></svg>
<svg style='left:447.30px;top:207.30px' width='4.80' height='2.60' viewBox='0 0 10 5' preserveAspectRatio='none'><path d='M0 0h10L5 5z' fill='#5f6368'/></svg>
<div class='t' style='left:53.10px;top:217.97px;width:144.70px;overflow:hidden;font-size:8.3px;color:#262626;'>Консалтинг по брендингу</div>
<div class='t' style='left:200.40px;top:217.97px;width:46.00px;overflow:hidden;font-size:8.3px;color:#262626;'>Клиент-сервис</div>
<div class='t' style='left:261.70px;top:217.97px;width:45.90px;overflow:hidden;font-size:8.3px;color:#262626;'>Петров</div>
<div class='t' style='right:556.90px;top:217.97px;font-size:8.3px;color:#262626;text-align:right;'>850 000</div>
<div class='t' style='left:398.00px;top:217.97px;width:45.50px;overflow:hidden;font-size:8.3px;color:#262626;'>с НДС</div>
<div class='t' style='right:434.20px;top:217.97px;font-size:8.3px;color:#262626;text-align:right;'>110 000</div>
<div class='t' style='right:373.40px;top:217.97px;font-size:8.3px;color:#262626;text-align:right;'>740 000</div>
<div class='t' style='right:312.10px;top:217.97px;font-size:8.3px;color:#262626;text-align:right;'>250 000</div>
<div class='t' style='right:228.10px;top:217.97px;font-size:8.3px;color:#262626;text-align:right;'>600 000</div>
<div class='t' style='right:166.90px;top:217.97px;font-size:8.3px;color:#262626;text-align:right;'>16.05.2018</div>
<div class='t' style='right:105.30px;top:217.97px;font-size:8.3px;color:#262626;text-align:right;'>11.07.2018</div>
<div class='t' style='right:44.10px;top:217.97px;font-size:8.3px;color:#262626;text-align:right;'>7</div>
<svg style='left:250.20px;top:219.90px' width='4.80' height='2.60' viewBox='0 0 10 5' preserveAspectRatio='none'><path d='M0 0h10L5 5z' fill='#5f6368'/></svg>
<svg style='left:311.40px;top:219.90px' width='4.80' height='2.60' viewBox='0 0 10 5' preserveAspectRatio='none'><path d='M0 0h10L5 5z' fill='#5f6368'/></svg>
<svg style='left:447.30px;top:219.90px' width='4.80' height='2.60' viewBox='0 0 10 5' preserveAspectRatio='none'><path d='M0 0h10L5 5z' fill='#5f6368'/></svg>
<div class='t' style='left:53.10px;top:230.57px;width:144.70px;overflow:hidden;font-size:8.3px;color:#262626;'>Консалтинг по юридической защите</div>
<div class='t' style='left:200.40px;top:230.57px;width:46.00px;overflow:hidden;font-size:8.3px;color:#262626;'>Мегаработа</div>
<div class='t' style='left:261.70px;top:230.57px;width:45.90px;overflow:hidden;font-size:8.3px;color:#262626;'>Сидоров</div>
<div class='t' style='right:556.90px;top:230.57px;font-size:8.3px;color:#262626;text-align:right;'>4 500 000</div>
<div class='t' style='left:398.00px;top:230.57px;width:45.50px;overflow:hidden;font-size:8.3px;color:#262626;'>с НДС</div>
<div class='t' style='right:434.20px;top:230.57px;font-size:8.3px;color:#262626;text-align:right;'>500 000</div>
<div class='t' style='right:373.40px;top:230.57px;font-size:8.3px;color:#262626;text-align:right;'>4 000 000</div>
<div class='t' style='right:312.10px;top:230.57px;font-size:8.3px;color:#262626;text-align:right;'>2 500 000</div>
<div class='t' style='right:228.10px;top:230.57px;font-size:8.3px;color:#262626;text-align:right;'>2 000 000</div>
<div class='t' style='right:166.90px;top:230.57px;font-size:8.3px;color:#262626;text-align:right;'>12.06.2018</div>
<div class='t' style='right:105.30px;top:230.57px;font-size:8.3px;color:#262626;text-align:right;'>19.07.2018</div>
<div class='t' style='right:44.10px;top:230.57px;font-size:8.3px;color:#262626;text-align:right;'>7</div>
<svg style='left:250.20px;top:232.50px' width='4.80' height='2.60' viewBox='0 0 10 5' preserveAspectRatio='none'><path d='M0 0h10L5 5z' fill='#5f6368'/></svg>
<svg style='left:311.40px;top:232.50px' width='4.80' height='2.60' viewBox='0 0 10 5' preserveAspectRatio='none'><path d='M0 0h10L5 5z' fill='#5f6368'/></svg>
<svg style='left:447.30px;top:232.50px' width='4.80' height='2.60' viewBox='0 0 10 5' preserveAspectRatio='none'><path d='M0 0h10L5 5z' fill='#5f6368'/></svg>
<div class='t' style='left:53.10px;top:243.17px;width:144.70px;overflow:hidden;font-size:8.3px;color:#262626;'>Консалтинг по работе с Рисками</div>
<div class='t' style='left:200.40px;top:243.17px;width:46.00px;overflow:hidden;font-size:8.3px;color:#262626;'>Валео-сервис</div>
<div class='t' style='left:261.70px;top:243.17px;width:45.90px;overflow:hidden;font-size:8.3px;color:#262626;'>Иванов</div>
<div class='t' style='right:556.90px;top:243.17px;font-size:8.3px;color:#262626;text-align:right;'>1 200 000</div>
<div class='t' style='left:398.00px;top:243.17px;width:45.50px;overflow:hidden;font-size:8.3px;color:#262626;'>без НДС</div>
<div class='t' style='right:434.20px;top:243.17px;font-size:8.3px;color:#262626;text-align:right;'>0</div>
<div class='t' style='right:373.40px;top:243.17px;font-size:8.3px;color:#262626;text-align:right;'>1 200 000</div>
<div class='t' style='right:312.10px;top:243.17px;font-size:8.3px;color:#262626;text-align:right;'>450 000</div>
<div class='t' style='right:228.10px;top:243.17px;font-size:8.3px;color:#262626;text-align:right;'>750 000</div>
<div class='t' style='right:166.90px;top:243.17px;font-size:8.3px;color:#262626;text-align:right;'>17.07.2018</div>
<div class='t' style='right:105.30px;top:243.17px;font-size:8.3px;color:#262626;text-align:right;'>20.09.2018</div>
<div class='t' style='right:44.10px;top:243.17px;font-size:8.3px;color:#262626;text-align:right;'>9</div>
<svg style='left:250.20px;top:245.10px' width='4.80' height='2.60' viewBox='0 0 10 5' preserveAspectRatio='none'><path d='M0 0h10L5 5z' fill='#5f6368'/></svg>
<svg style='left:311.40px;top:245.10px' width='4.80' height='2.60' viewBox='0 0 10 5' preserveAspectRatio='none'><path d='M0 0h10L5 5z' fill='#5f6368'/></svg>
<svg style='left:447.30px;top:245.10px' width='4.80' height='2.60' viewBox='0 0 10 5' preserveAspectRatio='none'><path d='M0 0h10L5 5z' fill='#5f6368'/></svg>
<div class='t' style='left:53.10px;top:255.77px;width:144.70px;overflow:hidden;font-size:8.3px;color:#262626;'>Риск-менеджмент на аутсорсе</div>
<div class='t' style='left:200.40px;top:255.77px;width:46.00px;overflow:hidden;font-size:8.3px;color:#262626;'>Консалт-туда</div>
<div class='t' style='left:261.70px;top:255.77px;width:45.90px;overflow:hidden;font-size:8.3px;color:#262626;'>Сидоров</div>
<div class='t' style='right:556.90px;top:255.77px;font-size:8.3px;color:#262626;text-align:right;'>2 800 000</div>
<div class='t' style='left:398.00px;top:255.77px;width:45.50px;overflow:hidden;font-size:8.3px;color:#262626;'>без НДС</div>
<div class='t' style='right:434.20px;top:255.77px;font-size:8.3px;color:#262626;text-align:right;'>0</div>
<div class='t' style='right:373.40px;top:255.77px;font-size:8.3px;color:#262626;text-align:right;'>2 800 000</div>
<div class='t' style='right:228.10px;top:255.77px;font-size:8.3px;color:#262626;text-align:right;'>2 800 000</div>
<div class='t' style='right:166.90px;top:255.77px;font-size:8.3px;color:#262626;text-align:right;'>12.09.2018</div>
<svg style='left:250.20px;top:257.70px' width='4.80' height='2.60' viewBox='0 0 10 5' preserveAspectRatio='none'><path d='M0 0h10L5 5z' fill='#5f6368'/></svg>
<svg style='left:311.40px;top:257.70px' width='4.80' height='2.60' viewBox='0 0 10 5' preserveAspectRatio='none'><path d='M0 0h10L5 5z' fill='#5f6368'/></svg>
<svg style='left:447.30px;top:257.70px' width='4.80' height='2.60' viewBox='0 0 10 5' preserveAspectRatio='none'><path d='M0 0h10L5 5z' fill='#5f6368'/></svg>
<div class='t' style='left:53.10px;top:268.37px;width:144.70px;overflow:hidden;font-size:8.3px;color:#262626;'>Бешбаршмак</div>
<div class='t' style='left:200.40px;top:268.37px;width:46.00px;overflow:hidden;font-size:8.3px;color:#262626;'>Клиент-сервис</div>
<div class='t' style='left:261.70px;top:268.37px;width:45.90px;overflow:hidden;font-size:8.3px;color:#262626;'>Петров</div>
<div class='t' style='right:373.40px;top:268.37px;font-size:8.3px;color:#262626;text-align:right;'>0</div>
<div class='t' style='right:228.10px;top:268.37px;font-size:8.3px;color:#262626;text-align:right;'>0</div>
<svg style='left:250.20px;top:270.30px' width='4.80' height='2.60' viewBox='0 0 10 5' preserveAspectRatio='none'><path d='M0 0h10L5 5z' fill='#5f6368'/></svg>
<svg style='left:311.40px;top:270.30px' width='4.80' height='2.60' viewBox='0 0 10 5' preserveAspectRatio='none'><path d='M0 0h10L5 5z' fill='#5f6368'/></svg>
<svg style='left:447.30px;top:270.30px' width='4.80' height='2.60' viewBox='0 0 10 5' preserveAspectRatio='none'><path d='M0 0h10L5 5z' fill='#5f6368'/></svg>
<div class='t' style='left:53.10px;top:280.97px;width:144.70px;overflow:hidden;font-size:8.3px;color:#262626;'>Почему так сложно придумать примеры</div>
<div class='t' style='left:200.40px;top:280.97px;width:46.00px;overflow:hidden;font-size:8.3px;color:#262626;'>Консалт-туда</div>
<div class='t' style='left:261.70px;top:280.97px;width:45.90px;overflow:hidden;font-size:8.3px;color:#262626;'>Иванов</div>
<div class='t' style='right:373.40px;top:280.97px;font-size:8.3px;color:#262626;text-align:right;'>0</div>
<div class='t' style='right:228.10px;top:280.97px;font-size:8.3px;color:#262626;text-align:right;'>0</div>
<svg style='left:250.20px;top:282.90px' width='4.80' height='2.60' viewBox='0 0 10 5' preserveAspectRatio='none'><path d='M0 0h10L5 5z' fill='#5f6368'/></svg>
<svg style='left:311.40px;top:282.90px' width='4.80' height='2.60' viewBox='0 0 10 5' preserveAspectRatio='none'><path d='M0 0h10L5 5z' fill='#5f6368'/></svg>
<svg style='left:447.30px;top:282.90px' width='4.80' height='2.60' viewBox='0 0 10 5' preserveAspectRatio='none'><path d='M0 0h10L5 5z' fill='#5f6368'/></svg>
<div class='t' style='right:373.40px;top:293.57px;font-size:8.3px;color:#262626;text-align:right;'>0</div>
<div class='t' style='right:228.10px;top:293.57px;font-size:8.3px;color:#262626;text-align:right;'>0</div>
<svg style='left:250.20px;top:295.50px' width='4.80' height='2.60' viewBox='0 0 10 5' preserveAspectRatio='none'><path d='M0 0h10L5 5z' fill='#5f6368'/></svg>
<svg style='left:311.40px;top:295.50px' width='4.80' height='2.60' viewBox='0 0 10 5' preserveAspectRatio='none'><path d='M0 0h10L5 5z' fill='#5f6368'/></svg>
<svg style='left:447.30px;top:295.50px' width='4.80' height='2.60' viewBox='0 0 10 5' preserveAspectRatio='none'><path d='M0 0h10L5 5z' fill='#5f6368'/></svg>
<div class='t' style='right:373.40px;top:306.17px;font-size:8.3px;color:#262626;text-align:right;'>0</div>
<div class='t' style='right:228.10px;top:306.17px;font-size:8.3px;color:#262626;text-align:right;'>0</div>
<svg style='left:250.20px;top:308.10px' width='4.80' height='2.60' viewBox='0 0 10 5' preserveAspectRatio='none'><path d='M0 0h10L5 5z' fill='#5f6368'/></svg>
<svg style='left:311.40px;top:308.10px' width='4.80' height='2.60' viewBox='0 0 10 5' preserveAspectRatio='none'><path d='M0 0h10L5 5z' fill='#5f6368'/></svg>
<svg style='left:447.30px;top:308.10px' width='4.80' height='2.60' viewBox='0 0 10 5' preserveAspectRatio='none'><path d='M0 0h10L5 5z' fill='#5f6368'/></svg>
<div class='t' style='right:373.40px;top:318.77px;font-size:8.3px;color:#262626;text-align:right;'>0</div>
<div class='t' style='right:228.10px;top:318.77px;font-size:8.3px;color:#262626;text-align:right;'>0</div>
<svg style='left:250.20px;top:320.70px' width='4.80' height='2.60' viewBox='0 0 10 5' preserveAspectRatio='none'><path d='M0 0h10L5 5z' fill='#5f6368'/></svg>
<svg style='left:311.40px;top:320.70px' width='4.80' height='2.60' viewBox='0 0 10 5' preserveAspectRatio='none'><path d='M0 0h10L5 5z' fill='#5f6368'/></svg>
<svg style='left:447.30px;top:320.70px' width='4.80' height='2.60' viewBox='0 0 10 5' preserveAspectRatio='none'><path d='M0 0h10L5 5z' fill='#5f6368'/></svg>
<div class='t' style='right:373.40px;top:331.37px;font-size:8.3px;color:#262626;text-align:right;'>0</div>
<div class='t' style='right:228.10px;top:331.37px;font-size:8.3px;color:#262626;text-align:right;'>0</div>
<svg style='left:250.20px;top:333.30px' width='4.80' height='2.60' viewBox='0 0 10 5' preserveAspectRatio='none'><path d='M0 0h10L5 5z' fill='#5f6368'/></svg>
<svg style='left:311.40px;top:333.30px' width='4.80' height='2.60' viewBox='0 0 10 5' preserveAspectRatio='none'><path d='M0 0h10L5 5z' fill='#5f6368'/></svg>
<svg style='left:447.30px;top:333.30px' width='4.80' height='2.60' viewBox='0 0 10 5' preserveAspectRatio='none'><path d='M0 0h10L5 5z' fill='#5f6368'/></svg>
<div class='t' style='right:373.40px;top:343.97px;font-size:8.3px;color:#262626;text-align:right;'>0</div>
<div class='t' style='right:228.10px;top:343.97px;font-size:8.3px;color:#262626;text-align:right;'>0</div>
<svg style='left:250.20px;top:345.90px' width='4.80' height='2.60' viewBox='0 0 10 5' preserveAspectRatio='none'><path d='M0 0h10L5 5z' fill='#5f6368'/></svg>
<svg style='left:311.40px;top:345.90px' width='4.80' height='2.60' viewBox='0 0 10 5' preserveAspectRatio='none'><path d='M0 0h10L5 5z' fill='#5f6368'/></svg>
<svg style='left:447.30px;top:345.90px' width='4.80' height='2.60' viewBox='0 0 10 5' preserveAspectRatio='none'><path d='M0 0h10L5 5z' fill='#5f6368'/></svg>
<div class='t' style='right:373.40px;top:356.57px;font-size:8.3px;color:#262626;text-align:right;'>0</div>
<div class='t' style='right:228.10px;top:356.57px;font-size:8.3px;color:#262626;text-align:right;'>0</div>
<svg style='left:250.20px;top:358.50px' width='4.80' height='2.60' viewBox='0 0 10 5' preserveAspectRatio='none'><path d='M0 0h10L5 5z' fill='#5f6368'/></svg>
<svg style='left:311.40px;top:358.50px' width='4.80' height='2.60' viewBox='0 0 10 5' preserveAspectRatio='none'><path d='M0 0h10L5 5z' fill='#5f6368'/></svg>
<svg style='left:447.30px;top:358.50px' width='4.80' height='2.60' viewBox='0 0 10 5' preserveAspectRatio='none'><path d='M0 0h10L5 5z' fill='#5f6368'/></svg>
<div class='t' style='right:373.40px;top:369.17px;font-size:8.3px;color:#262626;text-align:right;'>0</div>
<div class='t' style='right:228.10px;top:369.17px;font-size:8.3px;color:#262626;text-align:right;'>0</div>
<svg style='left:250.20px;top:371.10px' width='4.80' height='2.60' viewBox='0 0 10 5' preserveAspectRatio='none'><path d='M0 0h10L5 5z' fill='#5f6368'/></svg>
<svg style='left:311.40px;top:371.10px' width='4.80' height='2.60' viewBox='0 0 10 5' preserveAspectRatio='none'><path d='M0 0h10L5 5z' fill='#5f6368'/></svg>
<svg style='left:447.30px;top:371.10px' width='4.80' height='2.60' viewBox='0 0 10 5' preserveAspectRatio='none'><path d='M0 0h10L5 5z' fill='#5f6368'/></svg>
<div class='t' style='right:373.40px;top:381.77px;font-size:8.3px;color:#262626;text-align:right;'>0</div>
<div class='t' style='right:228.10px;top:381.77px;font-size:8.3px;color:#262626;text-align:right;'>0</div>
<svg style='left:250.20px;top:383.70px' width='4.80' height='2.60' viewBox='0 0 10 5' preserveAspectRatio='none'><path d='M0 0h10L5 5z' fill='#5f6368'/></svg>
<svg style='left:311.40px;top:383.70px' width='4.80' height='2.60' viewBox='0 0 10 5' preserveAspectRatio='none'><path d='M0 0h10L5 5z' fill='#5f6368'/></svg>
<svg style='left:447.30px;top:383.70px' width='4.80' height='2.60' viewBox='0 0 10 5' preserveAspectRatio='none'><path d='M0 0h10L5 5z' fill='#5f6368'/></svg>
<div class='t' style='right:373.40px;top:394.37px;font-size:8.3px;color:#262626;text-align:right;'>0</div>
<div class='t' style='right:228.10px;top:394.37px;font-size:8.3px;color:#262626;text-align:right;'>0</div>
<svg style='left:250.20px;top:396.30px' width='4.80' height='2.60' viewBox='0 0 10 5' preserveAspectRatio='none'><path d='M0 0h10L5 5z' fill='#5f6368'/></svg>
<svg style='left:311.40px;top:396.30px' width='4.80' height='2.60' viewBox='0 0 10 5' preserveAspectRatio='none'><path d='M0 0h10L5 5z' fill='#5f6368'/></svg>
<svg style='left:447.30px;top:396.30px' width='4.80' height='2.60' viewBox='0 0 10 5' preserveAspectRatio='none'><path d='M0 0h10L5 5z' fill='#5f6368'/></svg>
<div class='t' style='right:373.40px;top:406.97px;font-size:8.3px;color:#262626;text-align:right;'>0</div>
<div class='t' style='right:228.10px;top:406.97px;font-size:8.3px;color:#262626;text-align:right;'>0</div>
<svg style='left:250.20px;top:408.90px' width='4.80' height='2.60' viewBox='0 0 10 5' preserveAspectRatio='none'><path d='M0 0h10L5 5z' fill='#5f6368'/></svg>
<svg style='left:311.40px;top:408.90px' width='4.80' height='2.60' viewBox='0 0 10 5' preserveAspectRatio='none'><path d='M0 0h10L5 5z' fill='#5f6368'/></svg>
<svg style='left:447.30px;top:408.90px' width='4.80' height='2.60' viewBox='0 0 10 5' preserveAspectRatio='none'><path d='M0 0h10L5 5z' fill='#5f6368'/></svg>
<div class='t' style='right:373.40px;top:419.57px;font-size:8.3px;color:#262626;text-align:right;'>0</div>
<div class='t' style='right:228.10px;top:419.57px;font-size:8.3px;color:#262626;text-align:right;'>0</div>
<svg style='left:250.20px;top:421.50px' width='4.80' height='2.60' viewBox='0 0 10 5' preserveAspectRatio='none'><path d='M0 0h10L5 5z' fill='#5f6368'/></svg>
<svg style='left:311.40px;top:421.50px' width='4.80' height='2.60' viewBox='0 0 10 5' preserveAspectRatio='none'><path d='M0 0h10L5 5z' fill='#5f6368'/></svg>
<svg style='left:447.30px;top:421.50px' width='4.80' height='2.60' viewBox='0 0 10 5' preserveAspectRatio='none'><path d='M0 0h10L5 5z' fill='#5f6368'/></svg>
<div class='t' style='right:373.40px;top:432.17px;font-size:8.3px;color:#262626;text-align:right;'>0</div>
<div class='t' style='right:228.10px;top:432.17px;font-size:8.3px;color:#262626;text-align:right;'>0</div>
<div class='a' style='left:50.59375px;top:139.296875px;width:148.0px;height:1.0px;background:#2f5da6;'></div>
<div class='a' style='left:197.09375px;top:139.59375px;width:1.5px;height:21.5px;background:#1a73e8;'></div>
<div class='a' style='left:50.59375px;top:159.703125px;width:148.0px;height:1.390625px;background:#1a73e8;'></div>
<div class='a' style='left:194.80px;top:157.30px;width:6.2px;height:6.2px;border-radius:50%;background:#1a73e8;border:0.9px solid #fff'></div>
<div class='a' style='left:913.59375px;top:107.59375px;width:7.40625px;height:334.40625px;background:#ffffff;'></div>
<div class='a' style='left:913.296875px;top:107.59375px;width:1.0px;height:334.40625px;background:#ebebeb;'></div>
<div class='a' style='left:915.1px;top:140.2px;width:4.6px;height:15.5px;background:#dadce0;border-radius:2.3px'></div>
<div class='a' style='left:913.59375px;top:413.59375px;width:7.40625px;height:1.0px;background:#f1f1f1;'></div>
<div class='a' style='left:914.203125px;top:414.40625px;width:6.796875px;height:19.5px;background:#fbfbfb;'></div>
<svg style='left:915.6px;top:418.0px' width='3.8' height='2.2' viewBox='0 0 10 6' preserveAspectRatio='none'><path d='M0 6L5 0 10 6z' fill='#80868b'/></svg>
<div class='a' style='left:914.203125px;top:423.75px;width:6.390625px;height:1.0px;background:#aecbfa;'></div>
<svg style='left:915.6px;top:428.2px' width='3.8' height='2.2' viewBox='0 0 10 6' preserveAspectRatio='none'><path d='M0 0L5 6 10 0z' fill='#80868b'/></svg>
<div class='a' style='left:22.796875px;top:433.90625px;width:890.796875px;height:8.09375px;background:#ffffff;'></div>
<div class='a' style='left:22.796875px;top:433.90625px;width:27.796875px;height:8.09375px;background:#f8f9fa;'></div>
<div class='a' style='left:22.796875px;top:433.546875px;width:898.203125px;height:1.0px;background:#ebebeb;'></div>
<div class='a' style='left:52.4px;top:434.8px;width:312.6px;height:6.2px;background:#dadce0;border-radius:3.1px'></div>
<div class='a' style='left:895.796875px;top:434.40625px;width:17.796875px;height:7.59375px;background:#f8f9fa;'></div>
<div class='a' style='left:904.703125px;top:434.40625px;width:1.0px;height:7.59375px;background:#efefef;'></div>
<div class='a' style='left:913.59375px;top:434.40625px;width:7.40625px;height:7.59375px;background:#f3f3f3;'></div>
<svg style='left:899.4px;top:436.4px' width='2.2' height='3.8' viewBox='0 0 6 10' preserveAspectRatio='none'><path d='M6 0L0 5 6 10z' fill='#80868b'/></svg>
<svg style='left:909.0px;top:436.4px' width='2.2' height='3.8' viewBox='0 0 6 10' preserveAspectRatio='none'><path d='M0 0L6 5 0 10z' fill='#80868b'/></svg>
<div class='a' style='left:22.796875px;top:441.65625px;width:898.203125px;height:1.0px;background:#e6e6e6;'></div>
<div class='a' style='left:57.09375px;top:452.703125px;width:6.40625px;height:1.0px;background:#444746;'></div>
<div class='a' style='left:59.796875px;top:450.0px;width:1.0px;height:6.40625px;background:#444746;'></div>
<div class='a' style='left:80.40625px;top:450.09375px;width:7.390625px;height:1.0px;background:#444746;'></div>
<div class='a' style='left:80.40625px;top:452.5px;width:7.390625px;height:1.0px;background:#444746;'></div>
<div class='a' style='left:80.40625px;top:454.90625px;width:7.390625px;height:1.0px;background:#444746;'></div>
<div class='a' style='left:103.59375px;top:442.40625px;width:78.90625px;height:18.5px;background:#e1e9f7;'></div>
<div class='t' style='left:111.00px;top:449.78px;font-size:9.0px;color:#0b57d0;font-weight:bold;letter-spacing:-0.09px'>Учет сделок</div>
<svg style='left:171.90px;top:452.45px' width='4.40' height='2.30' viewBox='0 0 10 5' preserveAspectRatio='none'><path d='M0 0h10L5 5z' fill='#0b57d0'/></svg>
<div class='t' style='left:190.50px;top:449.78px;font-size:9.0px;color:#444746;letter-spacing:0.17px'>По клиентам</div>
<svg style='left:252.50px;top:452.45px' width='4.40' height='2.30' viewBox='0 0 10 5' preserveAspectRatio='none'><path d='M0 0h10L5 5z' fill='#444746'/></svg>
<div class='t' style='left:272.60px;top:449.78px;font-size:9.0px;color:#444746;letter-spacing:0.14px'>Для выгрузки в ОПИУ</div>
<svg style='left:372.50px;top:452.45px' width='4.40' height='2.30' viewBox='0 0 10 5' preserveAspectRatio='none'><path d='M0 0h10L5 5z' fill='#444746'/></svg>
<div class='t' style='left:392.60px;top:449.78px;font-size:9.0px;color:#444746;letter-spacing:0.3px'>Справочник</div>
<svg style='left:451.50px;top:452.45px' width='4.40' height='2.30' viewBox='0 0 10 5' preserveAspectRatio='none'><path d='M0 0h10L5 5z' fill='#444746'/></svg>
<div class='t' style='left:471.60px;top:449.78px;font-size:9.0px;color:#444746;letter-spacing:0.22px'>Пример логистика</div>
<svg style='left:558.40px;top:452.45px' width='4.40' height='2.30' viewBox='0 0 10 5' preserveAspectRatio='none'><path d='M0 0h10L5 5z' fill='#444746'/></svg>
<div class='t' style='left:578.50px;top:449.78px;font-size:9.0px;color:#444746;letter-spacing:0.14px'>Пример реклама</div>
<svg style='left:658.40px;top:452.45px' width='4.40' height='2.30' viewBox='0 0 10 5' preserveAspectRatio='none'><path d='M0 0h10L5 5z' fill='#444746'/></svg>
<div class='t' style='left:677.90px;top:449.78px;font-size:9.0px;color:#444746;letter-spacing:-0.2px'>НФ</div>
<svg style='left:697.80px;top:452.45px' width='4.40' height='2.30' viewBox='0 0 10 5' preserveAspectRatio='none'><path d='M0 0h10L5 5z' fill='#444746'/></svg>
</body></html>
